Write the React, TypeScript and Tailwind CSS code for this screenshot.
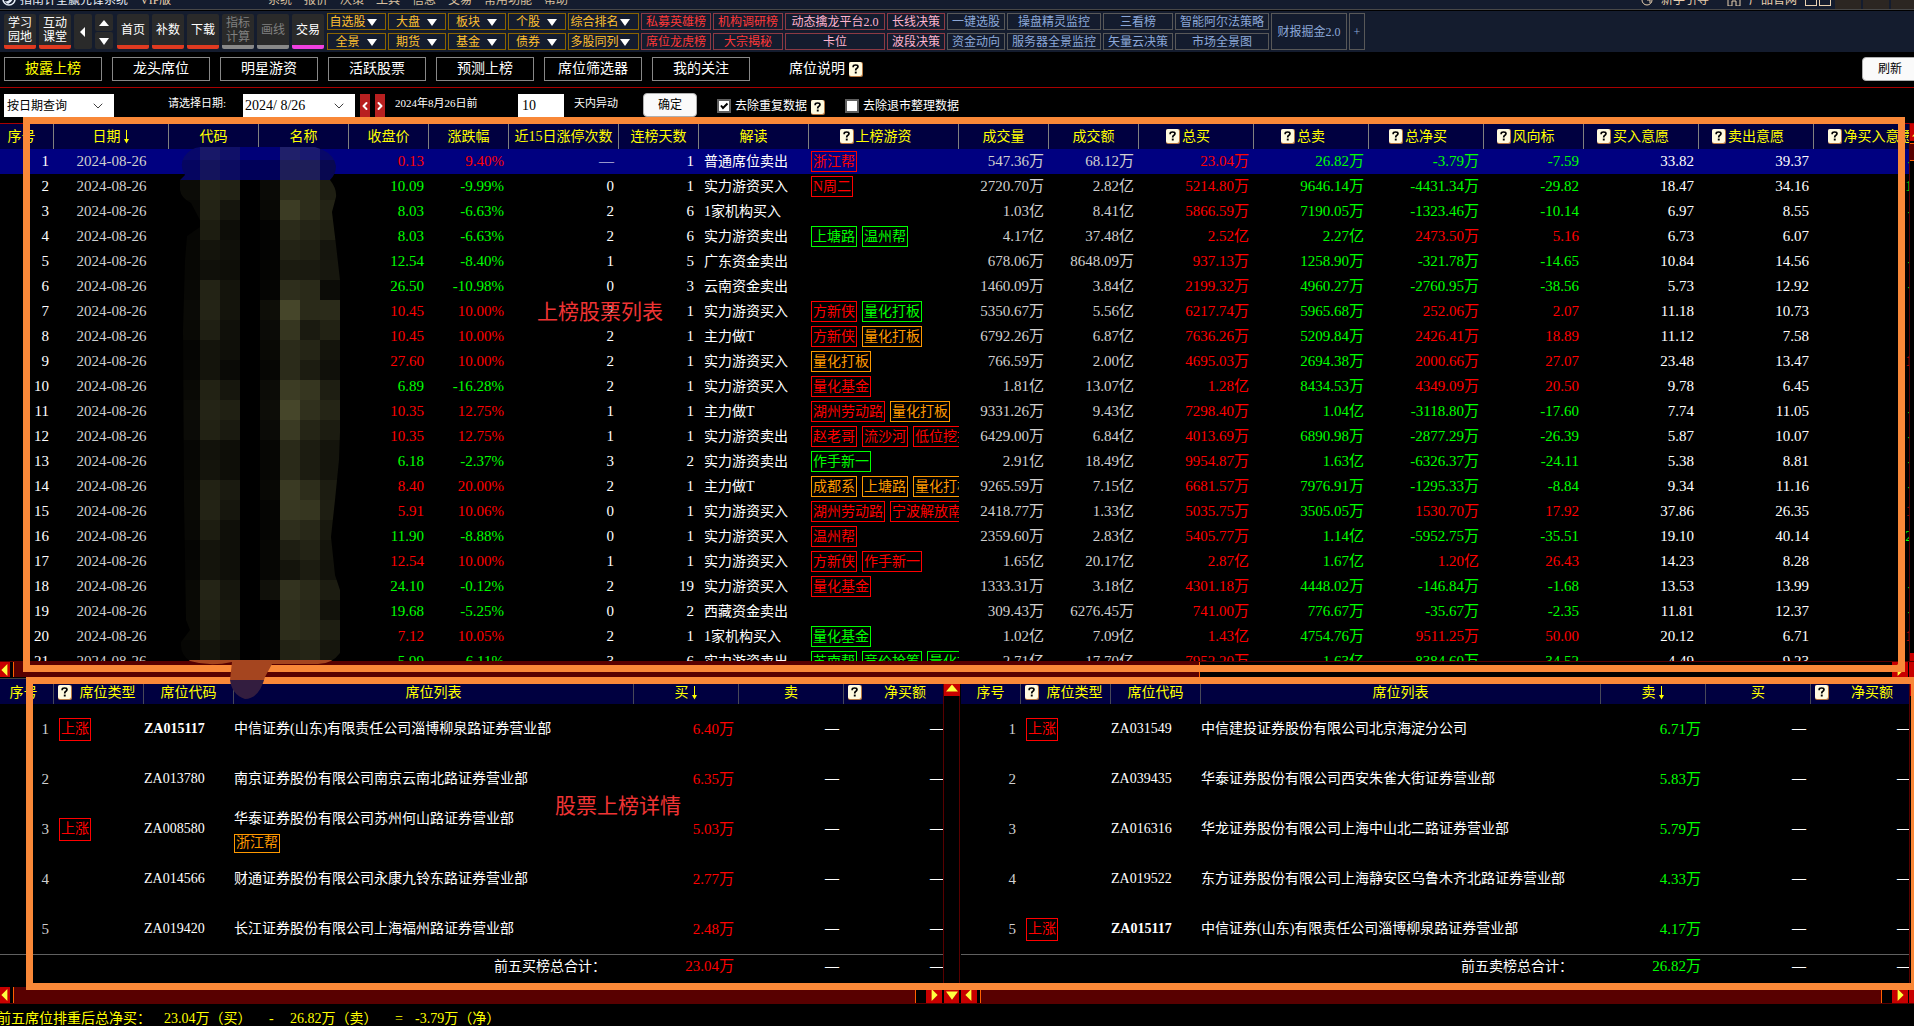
import { useState, type ReactNode } from 'react';
import { ChevronDown, ChevronLeft, ChevronRight } from 'lucide-react';

type Tone = 'red' | 'green' | 'orange';

const TAG_TONE: Record<Tone, string> = {
  red: 'border-[#ff0000] text-[#ff0000]',
  green: 'border-[#00ff00] text-[#00ff00]',
  orange: 'border-[#ff9900] text-[#ff9900]',
};

const signColor = (value: string) => (value.startsWith('-') ? 'text-[#00ff00]' : 'text-[#ff0000]');

/* ---------- data ---------- */

const MENUS = ['系统', '报价', '决策', '工具', '信息', '交易', '常用功能', '帮助'];

type ToolColumn = { width: string; tone: string; items: string[]; drop?: boolean };

const GOLD = 'border-[#8a6400] text-[#ffc030]';
const CRIMSON = 'border-[#8c3a44] text-[#ff3838]';
const PINK = 'border-[#8c3a44] text-[#ffb4d0]';
const STEEL = 'border-[#585858] text-[#8ca8d8]';

const TOOL_COLUMNS: ToolColumn[] = [
  { width: 'w-[59px]', tone: GOLD, items: ['自选股', '全景'], drop: true },
  { width: 'w-[58px]', tone: GOLD, items: ['大盘', '期货'], drop: true },
  { width: 'w-[58px]', tone: GOLD, items: ['板块', '基金'], drop: true },
  { width: 'w-[58px]', tone: GOLD, items: ['个股', '债券'], drop: true },
  { width: 'w-[71px]', tone: GOLD, items: ['综合排名', '多股同列'], drop: true },
  { width: 'w-[70px]', tone: CRIMSON, items: ['私募英雄榜', '席位龙虎榜'] },
  { width: 'w-[70px]', tone: CRIMSON, items: ['机构调研榜', '大宗揭秘'] },
  { width: 'w-[100px]', tone: PINK, items: ['动态擒龙平台2.0', '卡位'] },
  { width: 'w-[58px]', tone: PINK, items: ['长线决策', '波段决策'] },
  { width: 'w-[58px]', tone: STEEL, items: ['一键选股', '资金动向'] },
  { width: 'w-[94px]', tone: STEEL, items: ['操盘精灵监控', '服务器全景监控'] },
  { width: 'w-[70px]', tone: STEEL, items: ['三看榜', '矢量云决策'] },
  { width: 'w-[94px]', tone: STEEL, items: ['智能阿尔法策略', '市场全景图'] },
  { width: 'w-[76px]', tone: STEEL, items: ['财报掘金2.0'] },
  { width: 'w-4', tone: STEEL, items: ['+'] },
];

const TABS = ['披露上榜', '龙头席位', '明星游资', '活跃股票', '预测上榜', '席位筛选器', '我的关注'];

const COLUMNS: { label: string; width: string; help?: boolean; arrow?: boolean }[] = [
  { label: '序号', width: 'w-16' },
  { label: '日期', width: 'w-[115px]', arrow: true },
  { label: '代码', width: 'w-[90px]' },
  { label: '名称', width: 'w-[90px]' },
  { label: '收盘价', width: 'w-20' },
  { label: '涨跌幅', width: 'w-20' },
  { label: '近15日涨停次数', width: 'w-[110px]' },
  { label: '连榜天数', width: 'w-20' },
  { label: '解读', width: 'w-[110px]' },
  { label: '上榜游资', width: 'w-[150px]', help: true },
  { label: '成交量', width: 'w-[90px]' },
  { label: '成交额', width: 'w-[90px]' },
  { label: '总买', width: 'w-[115px]', help: true },
  { label: '总卖', width: 'w-[115px]', help: true },
  { label: '总净买', width: 'w-[115px]', help: true },
  { label: '风向标', width: 'w-[100px]', help: true },
  { label: '买入意愿', width: 'w-[115px]', help: true },
  { label: '卖出意愿', width: 'w-[115px]', help: true },
  { label: '净买入意愿', width: 'w-[130px]', help: true },
];

type Tag = [string, Tone];
type Stock = {
  price: string; pct: string; limit: string; days: number; note: string; tags: Tag[];
  vol: string; amt: string; buy: string; sell: string; net: string; wind: string; want: string; drop: string;
};

const s = (
  price: string, pct: string, limit: string, days: number, note: string, tags: Tag[],
  vol: string, amt: string, buy: string, sell: string, net: string, wind: string, want: string, drop: string,
): Stock => ({ price, pct, limit, days, note, tags, vol, amt, buy, sell, net, wind, want, drop });

const STOCKS: Stock[] = [
  s('0.13', '9.40%', '—', 1, '普通席位卖出', [['浙江帮', 'red']], '547.36万', '68.12万', '23.04万', '26.82万', '-3.79万', '-7.59', '33.82', '39.37'),
  s('10.09', '-9.99%', '0', 1, '实力游资买入', [['N周二', 'red']], '2720.70万', '2.82亿', '5214.80万', '9646.14万', '-4431.34万', '-29.82', '18.47', '34.16'),
  s('8.03', '-6.63%', '2', 6, '1家机构买入', [], '1.03亿', '8.41亿', '5866.59万', '7190.05万', '-1323.46万', '-10.14', '6.97', '8.55'),
  s('8.03', '-6.63%', '2', 6, '实力游资卖出', [['上塘路', 'green'], ['温州帮', 'green']], '4.17亿', '37.48亿', '2.52亿', '2.27亿', '2473.50万', '5.16', '6.73', '6.07'),
  s('12.54', '-8.40%', '1', 5, '广东资金卖出', [], '678.06万', '8648.09万', '937.13万', '1258.90万', '-321.78万', '-14.65', '10.84', '14.56'),
  s('26.50', '-10.98%', '0', 3, '云南资金卖出', [], '1460.09万', '3.84亿', '2199.32万', '4960.27万', '-2760.95万', '-38.56', '5.73', '12.92'),
  s('10.45', '10.00%', '2', 1, '实力游资买入', [['方新侠', 'red'], ['量化打板', 'green']], '5350.67万', '5.56亿', '6217.74万', '5965.68万', '252.06万', '2.07', '11.18', '10.73'),
  s('10.45', '10.00%', '2', 1, '主力做T', [['方新侠', 'red'], ['量化打板', 'orange']], '6792.26万', '6.87亿', '7636.26万', '5209.84万', '2426.41万', '18.89', '11.12', '7.58'),
  s('27.60', '10.00%', '2', 1, '实力游资买入', [['量化打板', 'orange']], '766.59万', '2.00亿', '4695.03万', '2694.38万', '2000.66万', '27.07', '23.48', '13.47'),
  s('6.89', '-16.28%', '2', 1, '实力游资买入', [['量化基金', 'red']], '1.81亿', '13.07亿', '1.28亿', '8434.53万', '4349.09万', '20.50', '9.78', '6.45'),
  s('10.35', '12.75%', '1', 1, '主力做T', [['湖州劳动路', 'red'], ['量化打板', 'orange']], '9331.26万', '9.43亿', '7298.40万', '1.04亿', '-3118.80万', '-17.60', '7.74', '11.05'),
  s('10.35', '12.75%', '1', 1, '实力游资卖出', [['赵老哥', 'red'], ['流沙河', 'red'], ['低位挖掘', 'red']], '6429.00万', '6.84亿', '4013.69万', '6890.98万', '-2877.29万', '-26.39', '5.87', '10.07'),
  s('6.18', '-2.37%', '3', 2, '实力游资卖出', [['作手新一', 'green']], '2.91亿', '18.49亿', '9954.87万', '1.63亿', '-6326.37万', '-24.11', '5.38', '8.81'),
  s('8.40', '20.00%', '2', 1, '主力做T', [['成都系', 'orange'], ['上塘路', 'orange'], ['量化打板', 'orange']], '9265.59万', '7.15亿', '6681.57万', '7976.91万', '-1295.33万', '-8.84', '9.34', '11.16'),
  s('5.91', '10.06%', '0', 1, '实力游资买入', [['湖州劳动路', 'red'], ['宁波解放南', 'red']], '2418.77万', '1.33亿', '5035.75万', '3505.05万', '1530.70万', '17.92', '37.86', '26.35'),
  s('11.90', '-8.88%', '0', 1, '实力游资买入', [['温州帮', 'red']], '2359.60万', '2.83亿', '5405.77万', '1.14亿', '-5952.75万', '-35.51', '19.10', '40.14'),
  s('12.54', '10.00%', '1', 1, '实力游资买入', [['方新侠', 'red'], ['作手新一', 'red']], '1.65亿', '20.17亿', '2.87亿', '1.67亿', '1.20亿', '26.43', '14.23', '8.28'),
  s('24.10', '-0.12%', '2', 19, '实力游资买入', [['量化基金', 'red']], '1333.31万', '3.18亿', '4301.18万', '4448.02万', '-146.84万', '-1.68', '13.53', '13.99'),
  s('19.68', '-5.25%', '0', 2, '西藏资金卖出', [], '309.43万', '6276.45万', '741.00万', '776.67万', '-35.67万', '-2.35', '11.81', '12.37'),
  s('7.12', '10.05%', '2', 1, '1家机构买入', [['量化基金', 'green']], '1.02亿', '7.09亿', '1.43亿', '4754.76万', '9511.25万', '50.00', '20.12', '6.71'),
  s('5.99', '-6.11%', '3', 6, '实力游资卖出', [['苏南帮', 'green'], ['竞价抢筹', 'green'], ['量化打板', 'green']], '2.71亿', '17.70亿', '7952.20万', '1.63亿', '-8384.60万', '-34.52', '4.49', '9.23'),
];

type Seat = { code: string; name: string; value: string; rising?: boolean; bold?: boolean; tag?: string };

const BUY_SEATS: Seat[] = [
  { code: 'ZA015117', name: '中信证券(山东)有限责任公司淄博柳泉路证券营业部', value: '6.40万', rising: true, bold: true },
  { code: 'ZA013780', name: '南京证券股份有限公司南京云南北路证券营业部', value: '6.35万' },
  { code: 'ZA008580', name: '华泰证券股份有限公司苏州何山路证券营业部', value: '5.03万', rising: true, tag: '浙江帮' },
  { code: 'ZA014566', name: '财通证券股份有限公司永康九铃东路证券营业部', value: '2.77万' },
  { code: 'ZA019420', name: '长江证券股份有限公司上海福州路证券营业部', value: '2.48万' },
];

const SELL_SEATS: Seat[] = [
  { code: 'ZA031549', name: '中信建投证券股份有限公司北京海淀分公司', value: '6.71万', rising: true },
  { code: 'ZA039435', name: '华泰证券股份有限公司西安朱雀大街证券营业部', value: '5.83万' },
  { code: 'ZA016316', name: '华龙证券股份有限公司上海中山北二路证券营业部', value: '5.79万' },
  { code: 'ZA019522', name: '东方证券股份有限公司上海静安区乌鲁木齐北路证券营业部', value: '4.33万' },
  { code: 'ZA015117', name: '中信证券(山东)有限责任公司淄博柳泉路证券营业部', value: '4.17万', rising: true, bold: true },
];

/* ---------- small parts ---------- */

function HelpIcon({ className = '' }: { className?: string }) {
  return (
    <svg viewBox="0 0 14 15" className={`h-[15px] w-3.5 shrink-0 ${className}`} aria-hidden="true">
      <rect x="0" y="0" width="14" height="15" rx="2" fill="#b87840" />
      <rect x="0" y="0" width="13" height="14" rx="2" fill="#fffbe0" />
      <path d="M4.2 5.2V4.4Q4.2 3 6.6 3T9 4.6Q9 5.8 7.6 6.6Q6.7 7.1 6.7 8.6" fill="none" stroke="#000" strokeWidth="1.7" />
      <rect x="5.8" y="9.6" width="1.9" height="1.9" fill="#000" />
    </svg>
  );
}

type Dir = 'up' | 'down' | 'left' | 'right';

const TRIANGLES: Record<Dir, string> = {
  up: 'M0 8L5 2L10 8Z',
  down: 'M0 2L5 9L10 2Z',
  left: 'M7 0L2 5L7 10Z',
  right: 'M3 0L8 5L3 10Z',
};

function Triangle({ dir, className }: { dir: Dir; className: string }) {
  return (
    <svg viewBox="0 0 10 10" className={`shrink-0 ${className}`} aria-hidden="true">
      <path d={TRIANGLES[dir]} fill="currentColor" />
    </svg>
  );
}

function SortArrow() {
  return (
    <svg viewBox="0 0 7 14" className="ml-0.5 h-3.5 w-[7px]" aria-hidden="true">
      <path d="M3 0H4V9H6L3.5 13.5L1 9H3Z" fill="currentColor" />
    </svg>
  );
}

function TagBox({ tone, className = 'h-[21px]', children }: { tone: Tone; className?: string; children: ReactNode }) {
  return (
    <span className={`inline-flex shrink-0 items-center border px-px text-sm leading-none ${className} ${TAG_TONE[tone]}`}>
      {children}
    </span>
  );
}

function ScrollButton({ dir, label, className = 'w-4' }: { dir: Dir; label: string; className?: string }) {
  return (
    <button aria-label={label} className={`flex shrink-0 items-center justify-center self-stretch bg-[#c80000] text-[#ffff40] ${className}`}>
      <Triangle dir={dir} className="size-3" />
    </button>
  );
}

/* ---------- top area ---------- */

function TitleBar() {
  return (
    <header className="flex h-2.5 items-end overflow-hidden border-b border-[#484848] bg-[#141c2e] pb-[3px] text-xs leading-3">
      <svg viewBox="0 0 14 14" className="ml-0.5 size-3.5 shrink-0" aria-hidden="true">
        <circle cx="7" cy="7" r="6" fill="none" stroke="#e8eef8" strokeWidth="1.6" />
        <path d="M2 9Q7 11 11 3Q12 9 6 12Z" fill="#e8eef8" />
      </svg>
      <span className="ml-1 w-[120px] text-[#e8eef8]">指南针全赢先锋系统</span>
      <span className="w-32 text-[#e8d0b0]">VIP版</span>
      <nav className="flex gap-3 text-[#d8c0a0]">
        {MENUS.map((m) => (
          <a key={m} href="#">{m}</a>
        ))}
      </nav>
      <div className="ml-auto flex items-end gap-2 text-[#e8d0b0]">
        <svg viewBox="0 0 12 12" className="size-3" aria-hidden="true">
          <circle cx="6" cy="6" r="5" fill="none" stroke="currentColor" />
          <path d="M6 6H9V9" fill="none" stroke="currentColor" />
        </svg>
        <a href="#" className="mr-2.5">新手引导</a>
        <svg viewBox="0 0 14 12" className="h-3 w-3.5" aria-hidden="true">
          <path d="M1 12V3L7 0L13 3V12H9V7H5V12Z" fill="none" stroke="currentColor" />
        </svg>
        <a href="#">产品官网</a>
        <div className="flex gap-0.5">
          <span className="size-3 border border-current" />
          <span className="size-3 border border-current" />
        </div>
      </div>
      <div className="-mb-[3px] flex w-[83px] gap-0.5 self-stretch pl-1">
        <span className="w-[26px] bg-[#2c2622]" />
        <span className="w-[26px] bg-[#2c2622]" />
        <span className="flex-1 bg-[#2c2622]" />
      </div>
    </header>
  );
}

function BigButton({ children, tone = 'border-[#e03a20] text-white' }: { children: ReactNode; tone?: string }) {
  return (
    <button className={`flex h-[35px] w-8 shrink-0 items-center justify-center rounded-xs border-b-4 bg-[#2a2a2a] text-xs leading-[14px] ${tone}`}>
      <span className="w-6">{children}</span>
    </button>
  );
}

function Toolbar() {
  return (
    <div className="mt-px flex h-[41px] items-start gap-0.5 overflow-hidden bg-[#141c2e] pt-0.5 pl-1">
      <div className="flex gap-[3px] pt-px pr-px">
        <BigButton>学习园地</BigButton>
        <BigButton>互动课堂</BigButton>
        <button aria-label="向左" className="flex h-[35px] w-[18px] items-center justify-center rounded-xs bg-[#2a2a2a] text-white">
          <Triangle dir="left" className="size-2.5" />
        </button>
        <div className="mr-px flex w-[18px] flex-col gap-px">
          <button aria-label="上一页" className="flex h-[17px] items-center justify-center rounded-xs bg-[#2a2a2a] text-white">
            <Triangle dir="up" className="size-2.5" />
          </button>
          <button aria-label="下一页" className="flex h-[17px] items-center justify-center rounded-xs bg-[#2a2a2a] text-white">
            <Triangle dir="down" className="size-2.5" />
          </button>
        </div>
        <BigButton>首页</BigButton>
        <BigButton>补数</BigButton>
        <BigButton>下载</BigButton>
        <BigButton tone="border-[#888888] text-[#808080]">指标计算</BigButton>
        <BigButton tone="border-[#888888] text-[#808080]">画线</BigButton>
        <BigButton tone="border-[#f040e0] text-white">交易</BigButton>
      </div>
      {TOOL_COLUMNS.map((col) => (
        <div key={col.items[0]} className={`flex h-[37px] shrink-0 flex-col gap-[3px] ${col.width}`}>
          {col.items.map((item) => (
            <button
              key={item}
              className={`flex flex-1 items-center justify-center border text-xs leading-none whitespace-nowrap ${col.tone}`}
            >
              <span className="flex-1 text-center">{item}</span>
              {col.drop && <Triangle dir="down" className="mr-2 size-2.5 text-white" />}
            </button>
          ))}
        </div>
      ))}
    </div>
  );
}

function TabRow() {
  const [active, setActive] = useState(TABS[0]);
  return (
    <div className="flex h-9 items-start gap-2.5 overflow-hidden border-b border-[#a80000] pt-[5px] pl-1 text-sm leading-none">
      {TABS.map((tab) => (
        <button
          key={tab}
          onClick={() => setActive(tab)}
          className={`h-6 w-[98px] shrink-0 border border-[#888888] ${tab === active ? 'text-[#ffff00]' : 'text-white'}`}
        >
          {tab}
        </button>
      ))}
      <a href="#" className="ml-[29px] flex h-6 items-center gap-1 text-white">
        席位说明
        <HelpIcon />
      </a>
      <button className="-mr-1 ml-auto h-6 w-14 rounded-sm border border-[#b0b0b0] bg-[#fafafa] text-xs text-black">刷新</button>
    </div>
  );
}

function Check({ id, label, defaultChecked }: { id: string; label: string; defaultChecked?: boolean }) {
  return (
    <div className="flex h-[22px] items-center gap-1 text-xs text-white">
      <span className="relative flex size-3.5">
        <input
          id={id}
          type="checkbox"
          defaultChecked={defaultChecked}
          className="peer size-3.5 appearance-none border-2 border-[#606060] bg-white"
        />
        <svg viewBox="0 0 14 14" className="pointer-events-none absolute inset-0 hidden peer-checked:block" aria-hidden="true">
          <path d="M4 6.5L6 9L10.5 4.5" fill="none" stroke="#000" strokeWidth="2" />
        </svg>
      </span>
      <label htmlFor={id}>{label}</label>
    </div>
  );
}

function FilterRow() {
  return (
    <div className="flex h-[29px] items-end overflow-hidden pl-1 leading-none whitespace-nowrap">
      <div className="relative w-[110px]">
        <select aria-label="查询方式" className="h-[23px] w-full appearance-none bg-white pl-[3px] text-xs text-black">
          <option>按日期查询</option>
        </select>
        <ChevronDown className="pointer-events-none absolute top-1 right-2 size-4 text-[#404040]" strokeWidth={1.5} />
      </div>
      <label htmlFor="query-date" className="ml-[54px] flex h-[23px] w-[75px] items-start pt-1 text-[11px] text-white">
        请选择日期:
      </label>
      <div className="relative w-28">
        <input id="query-date" defaultValue="2024/ 8/26" className="h-[23px] w-full bg-white pl-0.5 text-sm text-black" />
        <ChevronDown className="pointer-events-none absolute top-1 right-2 size-4 text-[#404040]" strokeWidth={1.5} />
      </div>
      <button aria-label="前一天" className="ml-[5px] flex h-[23px] w-2.5 items-center justify-center bg-[#b82020] text-white">
        <ChevronLeft className="size-3 shrink-0" strokeWidth={4} />
      </button>
      <button aria-label="后一天" className="ml-[5px] flex h-[23px] w-2.5 items-center justify-center bg-[#b82020] text-white">
        <ChevronRight className="size-3 shrink-0" strokeWidth={4} />
      </button>
      <label htmlFor="query-days" className="ml-2.5 flex h-[23px] w-[123px] items-start pt-1 text-[11px] text-white">
        2024年8月26日前
      </label>
      <input id="query-days" defaultValue="10" className="h-[23px] w-[46px] bg-white pl-1 text-sm text-black" />
      <span className="ml-2.5 flex h-[23px] w-[69px] items-start pt-1 text-[11px] text-white">天内异动</span>
      <button className="mr-5 h-6 w-[54px] rounded-sm border border-[#b0b0b0] bg-[#fafafa] text-xs text-black">确定</button>
      <Check id="dedupe" label="去除重复数据" defaultChecked />
      <HelpIcon className="mr-5 mb-0.5 ml-1" />
      <Check id="delisted" label="去除退市整理数据" />
    </div>
  );
}

/* ---------- stock list ---------- */

function StockTable() {
  return (
    <div className="h-[537px] min-w-0 flex-1 overflow-hidden">
      <table className="-ml-2.5 w-full table-fixed border-separate border-spacing-0 leading-none whitespace-nowrap">
        <thead>
          <tr className="h-[25px] bg-[#000040] text-sm leading-none text-[#ffff00]">
            {COLUMNS.map((c) => (
              <th key={c.label} className={`border-r border-[#808080] p-0 font-normal ${c.width}`}>
                <span className="flex items-center justify-center">
                  {c.help && <HelpIcon className="mr-0.5 -ml-4" />}
                  {c.label}
                  {c.arrow && <SortArrow />}
                </span>
              </th>
            ))}
          </tr>
        </thead>
        <tbody>
          {STOCKS.map((r, i) => {
            const gap = (Number(r.want) - Number(r.drop)).toFixed(2);
            return (
              <tr key={i} className={`h-[25px] text-right text-[15px] leading-none text-white ${i === 0 ? 'bg-[#000080]' : ''}`}>
                <td className="py-0 pr-[5px]">{i + 1}</td>
                <td className="p-0 text-center text-[#d0d0d0]">2024-08-26</td>
                <td className="p-0" />
                <td className="p-0" />
                <td className={`py-0 pr-[5px] ${signColor(r.pct)}`}>{r.price}</td>
                <td className={`py-0 pr-[5px] ${signColor(r.pct)}`}>{r.pct}</td>
                <td className="py-0 pr-[5px]">{r.limit}</td>
                <td className="py-0 pr-[5px]">{r.days}</td>
                <td className="py-0 pl-[5px] text-left text-sm leading-none">{r.note}</td>
                <td className="p-0 pl-0.5">
                  <div className="flex gap-[5px] overflow-hidden">
                    {r.tags.map(([text, tone]) => (
                      <TagBox key={text} tone={tone}>{text}</TagBox>
                    ))}
                  </div>
                </td>
                <td className="py-0 pr-[5px] text-[#d0d0d0]">{r.vol}</td>
                <td className="py-0 pr-[5px] text-[#d0d0d0]">{r.amt}</td>
                <td className="py-0 pr-[5px] text-[#ff0000]">{r.buy}</td>
                <td className="py-0 pr-[5px] text-[#00ff00]">{r.sell}</td>
                <td className={`py-0 pr-[5px] ${signColor(r.net)}`}>{r.net}</td>
                <td className={`py-0 pr-[5px] ${signColor(r.wind)}`}>{r.wind}</td>
                <td className="py-0 pr-[5px]">{r.want}</td>
                <td className="py-0 pr-[5px]">{r.drop}</td>
                <td className={`py-0 pr-[5px] ${signColor(gap)}`}>{gap}</td>
              </tr>
            );
          })}
        </tbody>
      </table>
    </div>
  );
}

function StockPanel() {
  return (
    <section className="border-t border-[#a80000]">
      <div className="flex">
        <StockTable />
        <div className="flex w-[5px] flex-col gap-0.5 overflow-hidden border-l border-[#580000]">
          <div className="flex h-[17px]">
            <ScrollButton dir="up" label="向上滚动" />
          </div>
          <div className="h-[18px] border-y border-[#ff6000] bg-[#580000]" />
          <div className="mt-auto h-2 bg-[#c80000]" />
        </div>
      </div>
      <div className="flex h-4 border-t border-[#580000]">
        <ScrollButton dir="left" label="向左滚动" className="w-2.5" />
        <div className="ml-[3px] w-[62%] border-x border-[#ff6000] bg-[#580000]" />
        <div className="flex-1" />
        <ScrollButton dir="right" label="向右滚动" />
        <div className="ml-px w-[5px] bg-[#c80000]" />
      </div>
    </section>
  );
}

/* Pixelated patch that hides the code and name columns */
const MOSAIC_X = [180, 200, 220, 240, 260, 280, 300, 320];
const MOSAIC = [
  [12, 37, 33, 0, 10, 45, 45, 30],
  [8, 35, 21, 0, 8, 60, 45, 35],
  [6, 29, 13, 0, 3, 43, 36, 32],
  [7, 20, 16, 0, 3, 35, 32, 21],
  [7, 16, 14, 0, 4, 27, 26, 23],
  [8, 35, 20, 0, 5, 46, 42, 12],
  [10, 36, 20, 0, 14, 70, 42, 43],
  [9, 31, 16, 0, 11, 54, 26, 34],
  [5, 20, 15, 0, 9, 43, 37, 20],
  [6, 20, 10, 0, 6, 43, 28, 16],
  [9, 34, 22, 0, 12, 60, 54, 30],
  [12, 36, 32, 0, 13, 70, 48, 37],
  [11, 34, 26, 0, 11, 58, 37, 28],
  [6, 18, 14, 0, 6, 42, 28, 20],
  [7, 20, 14, 0, 6, 42, 28, 20],
  [9, 34, 26, 0, 8, 58, 45, 28],
  [9, 35, 22, 0, 5, 56, 54, 30],
  [8, 29, 15, 0, 5, 46, 40, 24],
  [5, 20, 15, 0, 6, 30, 35, 20],
  [6, 20, 15, 0, 6, 20, 28, 18],
  [9, 36, 22, 0, 16, 51, 42, 28],
  [9, 32, 24, 0, 0, 45, 40, 18],
  [9, 29, 22, 0, 5, 45, 41, 30],
  [6, 20, 13, 0, 5, 34, 37, 22],
];
const MOSAIC_TOP = ['#08086a', '#181868', '#101068', '#000078', '#000078', '#20206a', '#1a1a70', '#080868'];
const MOSAIC_SECOND = ['#050560', '#14145c', '#0c0c60', '#000058', '#000058', '#1e1e58', '#1e1e58', '#080850'];

function Mosaic() {
  return (
    <svg viewBox="180 140 160 560" className="absolute top-[140px] left-[180px] h-[560px] w-40" aria-hidden="true">
      <clipPath id="smear">
        <path d="M200 147H315L323 150Q334 155 336 166Q336 174 330 180Q337 189 336 197L332 212L336 245L340 280V432L339 460L335 500L331 537L335 575L340 590V653Q332 664 318 664H272L265 677Q259 699 245 699Q232 695 230 680L232 662Q210 667 190 661Q180 655 181 642L190 630L186 620L184 500L183 330L185 260L187 236L200 227V220L191 203Q181 198 180 190V180L185 175Q179 166 184 157Q190 148 200 147Z" />
      </clipPath>
      <g clipPath="url(#smear)" shapeRendering="crispEdges">
        {MOSAIC_X.map((x, c) => (
          <g key={x}>
            <rect x={x} y={140} width={20} height={20} fill={MOSAIC_TOP[c]} />
            <rect x={x} y={160} width={20} height={20} fill={MOSAIC_SECOND[c]} />
            {MOSAIC.map((row, r) => (
              <rect key={r} x={x} y={180 + r * 20} width={20} height={20} fill={`rgb(${row[c]},${row[c]},${Math.round(row[c] * 0.6)})`} />
            ))}
          </g>
        ))}
        <rect x={180} y={660} width={160} height={20} fill="#a5451f" />
        <rect x={180} y={680} width={160} height={20} fill="#331d3f" />
      </g>
    </svg>
  );
}

/* ---------- seat details ---------- */

type SeatTableProps = { seats: Seat[]; first: string; second: string; total: string; totalLabel: string; tone: string; className?: string };

function SeatTable({ seats, first, second, total, totalLabel, tone, className = '' }: SeatTableProps) {
  const th = 'border-r border-[#484858] p-0 pt-0.5 font-normal';
  return (
    <div className="min-w-0 flex-1 overflow-hidden">
      <table className={`w-full table-fixed border-separate border-spacing-0 text-sm leading-none whitespace-nowrap text-white ${className}`}>
        <thead>
          <tr className="h-[25px] bg-[#000040] leading-none text-[#ffff00]">
            <th className={`w-[60px] ${th}`}>序号</th>
            <th className={`w-[90px] ${th}`}>
              <span className="flex items-center pl-1">
                <HelpIcon />
                <span className="flex-1">席位类型</span>
              </span>
            </th>
            <th className={`w-[90px] ${th}`}>席位代码</th>
            <th className={`w-[400px] ${th}`}>席位列表</th>
            <th className={`w-[105px] ${th}`}>
              <span className="flex items-center justify-center">
                {first}
                <SortArrow />
              </span>
            </th>
            <th className={`w-[105px] ${th}`}>{second}</th>
            <th className={`w-[105px] ${th}`}>
              <span className="flex items-center pl-1">
                <HelpIcon />
                <span className="flex-1">净买额</span>
              </span>
            </th>
          </tr>
        </thead>
        <tbody>
          {seats.map((seat, i) => (
            <tr key={seat.code} className="h-[50px] text-right">
              <td className="py-0 pr-[5px] text-[15px] text-[#d0d0d0]">{i + 1}</td>
              <td className="p-0 pl-[5px] text-left">
                {seat.rising && <TagBox tone="red" className="h-[23px]">上涨</TagBox>}
              </td>
              <td className={`p-0 text-left ${seat.bold ? 'font-bold' : ''}`}>{seat.code}</td>
              <td className="p-0 text-left">
                <div className={`flex flex-col items-start gap-2 ${seat.tag ? 'pt-1.5' : ''}`}>
                  {seat.name}
                  {seat.tag && <TagBox tone="orange" className="h-[19px]">{seat.tag}</TagBox>}
                </div>
              </td>
              <td className={`py-0 pr-[5px] text-[15px] ${tone}`}>{seat.value}</td>
              <td className="py-0 pr-[5px] font-bold">—</td>
              <td className="py-0 pr-[5px] font-bold">—</td>
            </tr>
          ))}
        </tbody>
        <tfoot>
          <tr className="h-6 text-right">
            <td colSpan={4} className="border-t border-[#606060] py-0 pr-7">{totalLabel}</td>
            <td className={`border-t border-[#606060] py-0 pr-[5px] text-[15px] ${tone}`}>{total}</td>
            <td className="border-t border-[#606060] py-0 pr-[5px] font-bold">—</td>
            <td className="border-t border-[#606060] py-0 pr-[5px] font-bold">—</td>
          </tr>
        </tfoot>
      </table>
    </div>
  );
}

function SeatPanels() {
  return (
    <section className="mt-px grid grid-cols-[961fr_953fr] border-t border-[#404040]">
      <div className="flex min-w-0 flex-col">
        <div className="flex h-[308px]">
          <SeatTable
            seats={BUY_SEATS}
            first="买"
            second="卖"
            total="23.04万"
            totalLabel="前五买榜总合计："
            tone="text-[#ff0000]"
            className="-ml-1.5"
          />
          <div className="mr-px flex w-[17px] flex-col border-x border-[#580000]">
            <div className="flex h-[17px]">
              <ScrollButton dir="up" label="向上滚动" />
            </div>
          </div>
        </div>
        <div className="flex h-[17px] border-b border-[#580000]">
          <ScrollButton dir="left" label="向左滚动" className="w-2.5" />
          <div className="ml-[3px] flex-1 border-x border-[#ff6000] bg-[#580000]" />
          <div className="w-2.5" />
          <ScrollButton dir="right" label="向右滚动" />
          <div className="mr-0.5 ml-0.5 flex">
            <ScrollButton dir="down" label="向下滚动" className="w-[15px]" />
          </div>
        </div>
      </div>
      <div className="flex min-w-0 flex-col">
        <div className="flex h-[308px]">
          <SeatTable
            seats={SELL_SEATS}
            first="卖"
            second="买"
            total="26.82万"
            totalLabel="前五卖榜总合计："
            tone="text-[#00ff00]"
          />
          <div className="flex w-[5px] flex-col overflow-hidden border-l border-[#580000]">
            <div className="h-[17px] bg-[#c80000]" />
          </div>
        </div>
        <div className="flex h-[17px] border-b border-[#580000]">
          <ScrollButton dir="left" label="向左滚动" />
          <div className="ml-[3px] flex-1 border-x border-[#ff6000] bg-[#580000]" />
          <div className="w-2.5" />
          <ScrollButton dir="right" label="向右滚动" />
          <div className="ml-px w-[5px] bg-[#c80000]" />
        </div>
      </div>
    </section>
  );
}

export default function App() {
  return (
    <main className="relative min-h-screen overflow-hidden bg-black font-['Liberation_Serif','Noto_Sans_CJK_SC',serif]">
      <TitleBar />
      <Toolbar />
      <TabRow />
      <FilterRow />
      <div className="h-1.5" />
      <StockPanel />
      <SeatPanels />
      <footer className="-ml-[3px] flex h-[23px] items-end pb-px text-sm leading-none whitespace-pre text-[#ffff00]">
        <span className="w-[167px]">前五席位排重后总净买：</span>
        <span className="w-[105px]">23.04万（买）</span>
        <span className="w-[21px]">-</span>
        <span className="w-[105px]">26.82万（卖）</span>
        <span className="w-5">=</span>
        <span>-3.79万（净）</span>
      </footer>

      {/* Callouts over the two panels */}
      <div className="pointer-events-none absolute top-[117px] right-[9px] left-[23px] h-[555px] border-[7px] border-[#f98838]" />
      <div className="pointer-events-none absolute top-[677px] -right-1 left-[26px] h-[313px] border-[7px] border-[#f98838]" />
      <Mosaic />
      <p className="pointer-events-none absolute top-[301px] left-[537px] text-[21px] leading-[22px] text-[#f03434]">上榜股票列表</p>
      <p className="pointer-events-none absolute top-[795px] left-[555px] text-[21px] leading-[22px] text-[#f03434]">股票上榜详情</p>
    </main>
  );
}
